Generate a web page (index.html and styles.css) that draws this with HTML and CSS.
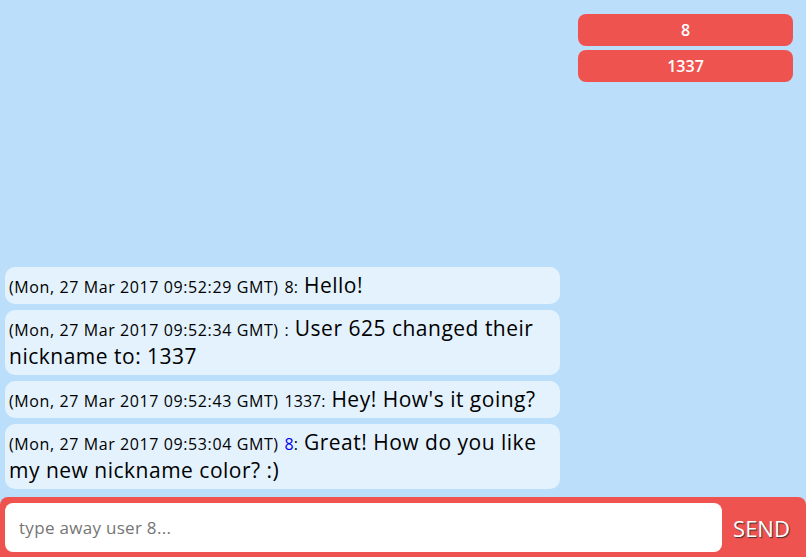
FILE: index.html
```html
<!DOCTYPE html>
<html>
<head>
<meta charset="utf-8">
<link rel="stylesheet" href="styles.css">
</head>
<body>
<div class="app">
  <div class="main">
    <ul class="messages">
      <li class="msg"><span class="time">(Mon, 27 Mar 2017 09:52:29 GMT)</span> <span class="nick">8:</span> <span class="text">Hello!</span></li>
      <li class="msg"><span class="time">(Mon, 27 Mar 2017 09:52:34 GMT)</span> <span class="nick">:</span> <span class="text">User 625 changed their nickname to: 1337</span></li>
      <li class="msg"><span class="time">(Mon, 27 Mar 2017 09:52:43 GMT)</span> <span class="nick">1337:</span> <span class="text">Hey! How's it going?</span></li>
      <li class="msg"><span class="time">(Mon, 27 Mar 2017 09:53:04 GMT)</span> <span class="nick blue">8</span><span class="nick">:</span> <span class="text">Great! How do you like my new nickname color? :)</span></li>
    </ul>
    <ul class="users">
      <li class="user">8</li>
      <li class="user">1337</li>
    </ul>
  </div>
  <form class="bar">
    <input class="input" type="text" placeholder="type away user 8...">
    <button class="send" type="button">SEND</button>
  </form>
</div>
</body>
</html>
```
FILE: styles.css
```css
* { box-sizing: border-box; }
html, body {
  margin: 0;
  padding: 0;
  height: 100%;
  background: #bbdefb;
  font-family: "Open Sans", "Lato", sans-serif;
  color: #000;
}
.app {
  height: 557px;
  display: flex;
  flex-direction: column;
}
.main {
  flex: 1;
  display: flex;
  min-height: 0;
}
.messages {
  list-style: none;
  margin: 0;
  padding: 0 0 8px 5px;
  width: 560px;
  display: flex;
  flex-direction: column;
  justify-content: flex-end;
  gap: 6px;
}
.msg {
  background: #e3f2fd;
  border-radius: 10px;
  padding: 4px 5px 5px 4px;
  line-height: 28px;
  font-size: 21px;
  letter-spacing: 0.5px;
}
.time, .nick {
  font-size: 16px;
  line-height: 1;
  letter-spacing: 0.6px;
}
.nick { letter-spacing: 0; }
.blue { color: #0000ee; }
.users {
  list-style: none;
  margin: 0;
  padding: 14px 13px 0 18px;
  flex: 1;
  display: flex;
  flex-direction: column;
  gap: 4px;
}
.user {
  background: #ef5350;
  color: #fff;
  border-radius: 8px;
  height: 32px;
  display: flex;
  align-items: center;
  justify-content: center;
  font-size: 16px;
  font-weight: 600;
}
.bar {
  height: 60px;
  margin: 0;
  background: #ef5350;
  border-radius: 8px 8px 0 0;
  display: flex;
  align-items: center;
  padding: 6px 5px 5px 5px;
  gap: 0;
}
.input {
  width: 717px;
  height: 49px;
  border: none;
  border-radius: 8px;
  background: #fff;
  padding: 0 14px;
  font-family: inherit;
  font-size: 17px;
  letter-spacing: 0.3px;
  outline: none;
}
.input::placeholder { color: #757575; }
.send {
  flex: 1;
  background: none;
  border: none;
  color: #fff;
  font-family: inherit;
  font-size: 22px;
  text-shadow: 1px 1px 1px #333;
  padding: 0;
  text-align: center;
}
```
